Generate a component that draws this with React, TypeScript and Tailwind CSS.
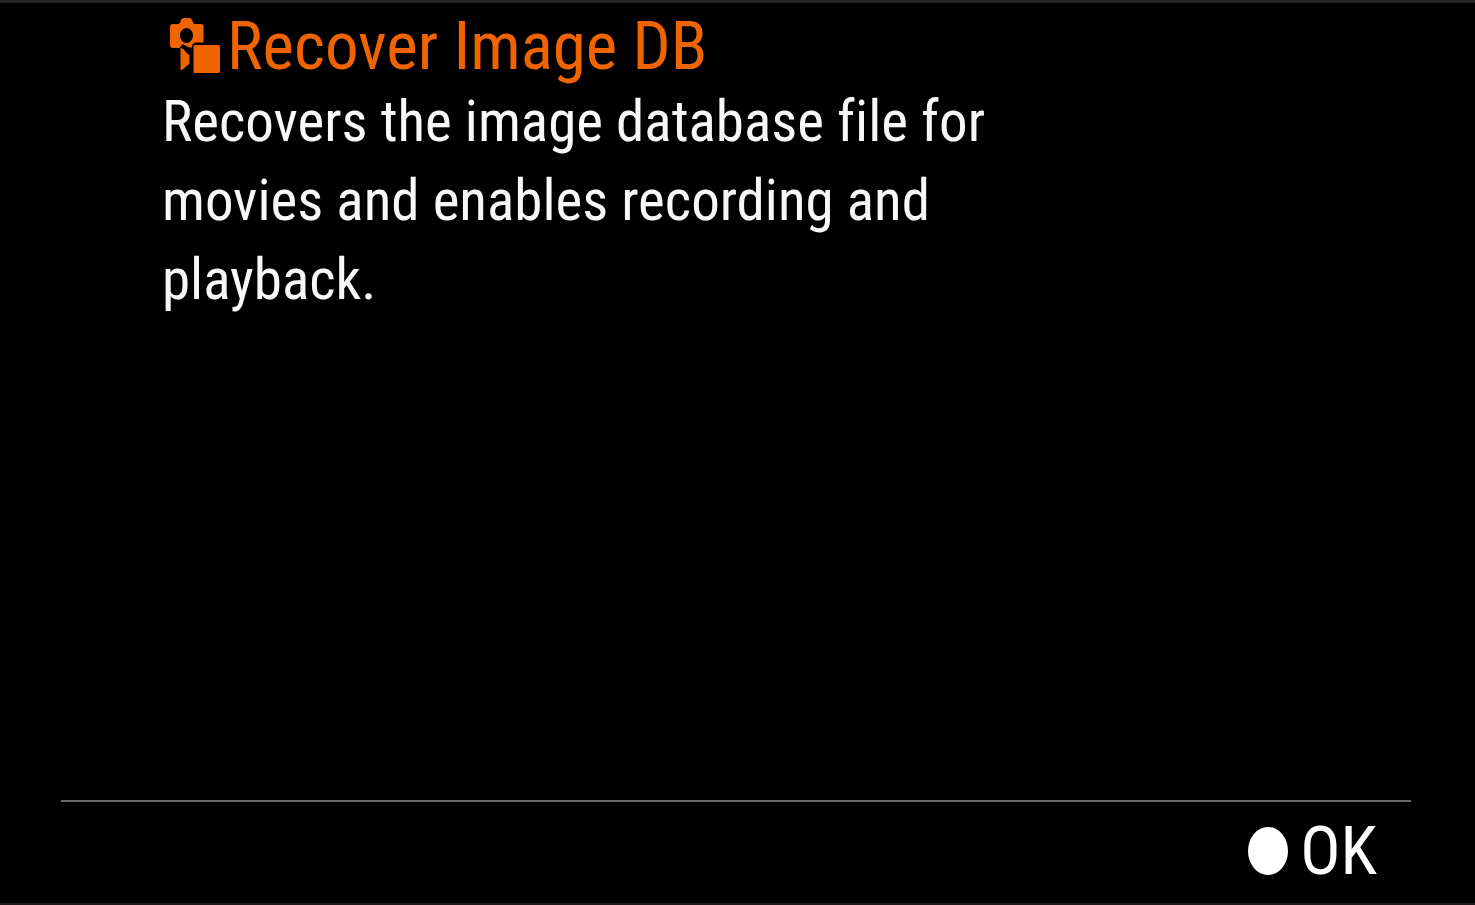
function MediaIcon() {
  return (
    <svg
      aria-hidden="true"
      viewBox="0 0 54 58"
      className="h-[58px] w-[54px] shrink-0"
      fill="#f06400"
    >
      <path
        fillRule="evenodd"
        d="M4 7H9.500Q11 6.500 11.500 4Q12.500 1 15 1H20Q22.500 1 23.500 4Q24 6.500 25.500 7H32Q34.500 7 34.500 9.500V25.500H26Q23.500 26 23 29V30.500H20L13.500 27L10.500 31H4Q1 31 1 28V10Q1 7 4 7ZM17.500 11A6.500 7.500 0 1 0 17.500 26A6.500 7.500 0 1 0 17.500 11Z"
      />
      <path d="M11.500 31L14.500 32L17.500 36L20.500 38V47L17.500 49L14.500 52L11.500 53.500Z" />
      <rect x="24.500" y="28" width="26.500" height="28" rx="1.500" />
    </svg>
  );
}

export default function App() {
  return (
    <main className="flex min-h-screen flex-col border-t-[3px] border-b-2 border-t-[#242424] border-b-[#1f1b1c] bg-black font-['Roboto_Condensed','Liberation_Sans',sans-serif] text-white [font-variant-ligatures:no-common-ligatures]">
      <section className="flex-1 pl-[162px] pr-16 pt-[7px]">
        <h1 className="flex h-[72px] items-center gap-1 pl-[7px] text-[67px] leading-[74px] text-[#f06400]">
          <MediaIcon />
          <span>Recover Image DB</span>
        </h1>
        <p className="max-w-[860px] text-[57px] leading-[79px] text-[#f8f8f8]">
          Recovers the image database file for movies and enables recording and
          playback.
        </p>
      </section>
      <footer className="ml-[61px] mr-16 flex h-[103px] justify-end border-t-2 border-[#6b6b6b] pb-1 pr-[34px]">
        <button
          type="button"
          className="flex items-center gap-3 text-[67px] leading-[80px]"
        >
          <span
            aria-hidden="true"
            className="h-12 w-10 rounded-[50%] bg-white"
          />
          OK
        </button>
      </footer>
    </main>
  );
}
